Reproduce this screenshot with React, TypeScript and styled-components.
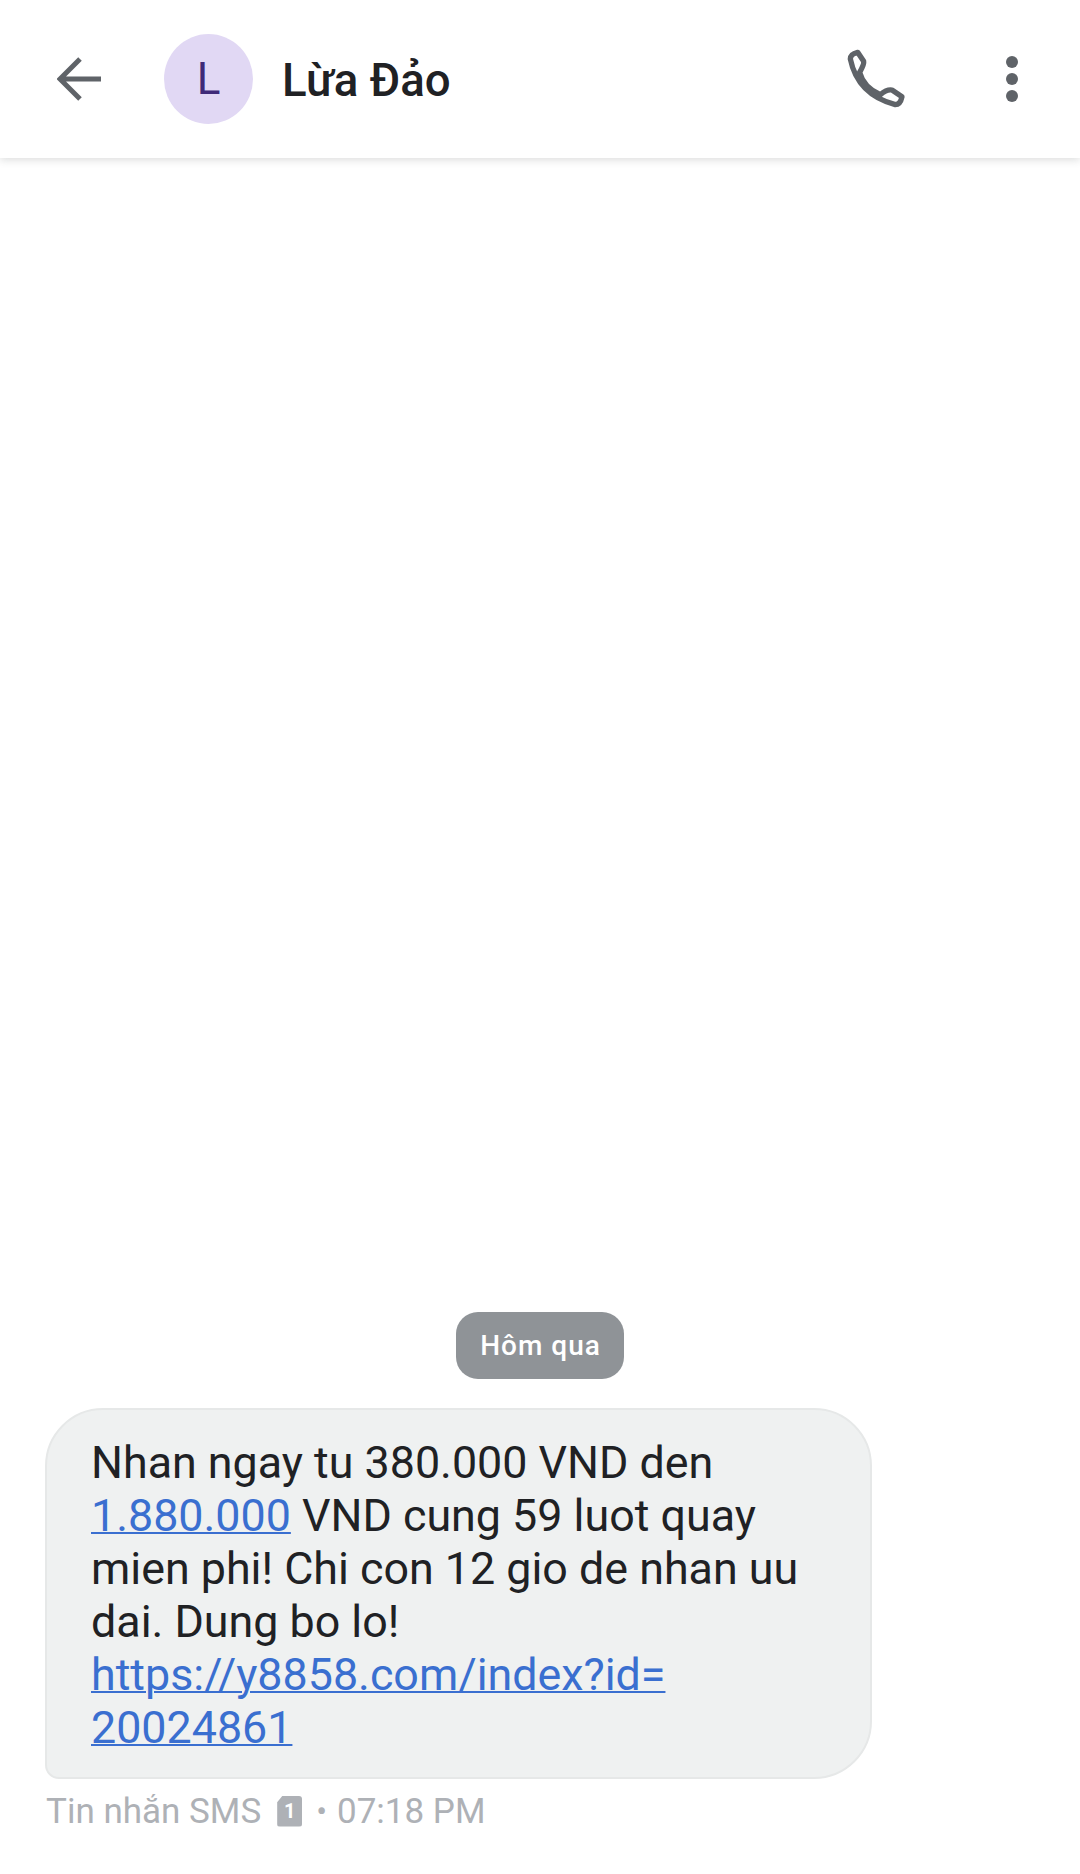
import styled, { createGlobalStyle } from 'styled-components';

const GlobalStyle = createGlobalStyle`
	html, body {
		margin: 0;
		padding: 0;
		background: #ffffff;
	}
	* {
		box-sizing: border-box;
	}
`
const Screen = styled.div`
	display: flex;
	flex-direction: column;
	width: 1080px;
	height: 1874px;
	overflow: hidden;
	font-family: Roboto, "Noto Sans", sans-serif;
	background: #ffffff;
`
const Header = styled.header`
	display: flex;
	align-items: center;
	flex: 0 0 158px;
	padding: 0 0 0 57px;
	box-shadow: 0 2px 8px rgba(60, 64, 67, 0.18);
	background: #ffffff;
`
const IconButton = styled.svg<{ $gap: number }>`
	display: block;
	flex: none;
	margin-right: ${({ $gap }) => $gap}px;
`
const Avatar = styled.div`
	display: flex;
	align-items: center;
	justify-content: center;
	flex: none;
	width: 89px;
	height: 90px;
	margin-right: 29px;
	border-radius: 50%;
	background: #e1d8f4;
	color: #3f2a78;
	font-size: 44px;
`
const Title = styled.h1`
	flex: 1;
	margin: 2px 0 0;
	font-size: 45.6px;
	font-weight: 500;
	color: #202124;
`
const Thread = styled.main`
	display: flex;
	flex-direction: column;
	flex: 1;
	justify-content: flex-end;
	padding: 0 0 46px 45px;
`
const DateChip = styled.div`
	display: flex;
	align-items: center;
	align-self: center;
	height: 67px;
	margin: 0 45px 29px 0;
	padding: 0 23px 0 24px;
	border-radius: 22px;
	background: #8f9397;
	color: #ffffff;
	font-size: 28px;
	font-weight: 500;
	letter-spacing: 1px;
`
const Bubble = styled.div`
	width: 827px;
	height: 371px;
	padding: 26px 40px 0 44px;
	border: 2px solid #e6e8e8;
	border-radius: 58px 58px 58px 14px;
	background: #eff1f1;
	color: #202124;
	font-size: 44.8px;
	line-height: 53px;
`
const MessageLink = styled.span`
	color: #3a6fd0;
	text-decoration: underline;
	text-decoration-thickness: 2px;
`
const Meta = styled.div`
	display: flex;
	align-items: center;
	height: 34px;
	margin-top: 15px;
	padding-left: 1px;
	color: #aeb1b6;
	font-size: 35px;
`
const SimBadge = styled.span`
	display: flex;
	align-items: center;
	justify-content: center;
	width: 25px;
	height: 31px;
	margin: 0 14px 0 16px;
	clip-path: polygon(0 22%, 22% 0, 100% 0, 100% 100%, 0 100%);
	border-radius: 3px;
	background: #aeb1b6;
	color: #ffffff;
	font-size: 20px;
	font-weight: 700;
`
const Dot = styled.span`
	margin-right: 10px;
	font-size: 32px;
`

const App = () => {
	return (
		<Screen>
			<GlobalStyle />
			<Header>
				<IconButton $gap={63} width="44" height="44" viewBox="0 0 44 44" fill="none" stroke="#5f6368" strokeWidth="5">
					<path d="M44 22H4M23 2 3 22l20 20" />
				</IconButton>
				<Avatar>L</Avatar>
				<Title>Lừa Đảo</Title>
				<IconButton $gap={98} width="60" height="60" viewBox="140 85 180 180" fill="none" stroke="#5f6368" strokeWidth="16" strokeLinejoin="round">
					<path d="M172 95L190 122Q192 130 178 155Q190 200 240 222Q260 205 275 208L305 228Q300 252 285 252Q172 222 150 115Q150 100 172 95Z" />
				</IconButton>
				<IconButton $gap={61} width="14" height="48" viewBox="0 0 14 48" fill="#5f6368">
					<circle cx="7" cy="7" r="6" />
					<circle cx="7" cy="24" r="6" />
					<circle cx="7" cy="41" r="6" />
				</IconButton>
			</Header>
			<Thread>
				<DateChip>Hôm qua</DateChip>
				<Bubble>
					Nhan ngay tu 380.000 VND den <MessageLink>1.880.000</MessageLink> VND cung 59 luot quay mien phi! Chi con 12 gio de nhan uu dai. Dung bo lo!
					<br />
					<MessageLink>https://y8858.com/index?id=<br />20024861</MessageLink>
				</Bubble>
				<Meta>
					Tin nhắn SMS
					<SimBadge>1</SimBadge>
					<Dot>•</Dot>
					07:18 PM
				</Meta>
			</Thread>
		</Screen>
	);
}

export default App;
